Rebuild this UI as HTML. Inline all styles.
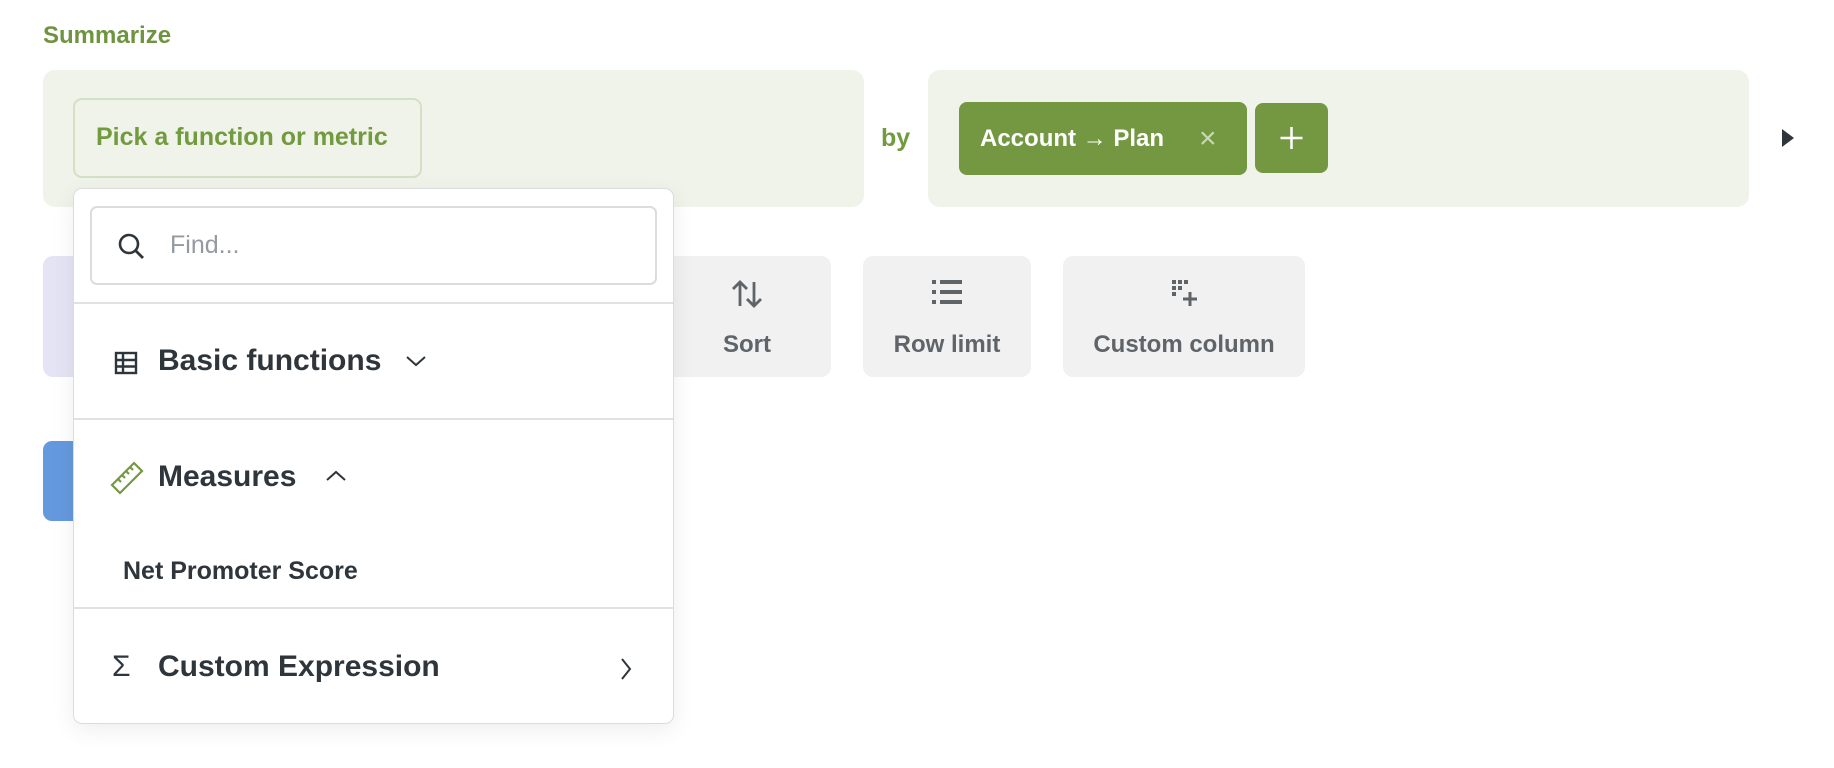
<!DOCTYPE html>
<html><head><meta charset="utf-8"><style>
*{box-sizing:border-box;margin:0;padding:0}
body{width:1834px;height:768px;background:#fff;font-family:"Liberation Sans",sans-serif;position:relative;overflow:hidden}
.abs{position:absolute}
.panel{background:#f0f3ea;border-radius:12px}
.btn{background:#f1f1f2;border-radius:10px;color:#5f6469;font-weight:bold;font-size:24px;text-align:center}
.btn svg{position:absolute;left:50%;top:22px;transform:translateX(-50%)}
.btn span{position:absolute;left:0;right:0;top:75px}
.dd{left:73px;top:188px;width:601px;height:536px;background:#fff;border:1px solid #dcdcdc;border-radius:9px;box-shadow:0 6px 24px rgba(0,0,0,0.07)}
.hr{position:absolute;left:0;right:0;height:2px;background:#e1e1e1}
.h{position:absolute;font-weight:bold;font-size:30px;color:#2e353b}
</style></head><body>
<div class="abs" style="left:43px;top:22px;font-size:24px;font-weight:bold;color:#6f9440">Summarize</div>
<div class="abs panel" style="left:43px;top:70px;width:821px;height:137px"></div>
<div class="abs" style="left:73px;top:98px;width:349px;height:80px;border:2.5px solid #d3e0c4;border-radius:9px;color:#729a3e;font-weight:bold;font-size:25px;line-height:75px;padding-left:21px;white-space:nowrap">Pick a function or metric</div>
<div class="abs" style="left:881px;top:124px;font-weight:bold;font-size:25px;color:#729a3e">by</div>
<div class="abs panel" style="left:928px;top:70px;width:821px;height:137px"></div>
<div class="abs" style="left:959px;top:102px;width:288px;height:73px;background:#749842;border-radius:8px;color:#fff;font-weight:bold;font-size:24px;line-height:73px;padding-left:21px;white-space:nowrap">Account → Plan<span style="position:absolute;left:240px;top:0;color:#c8d9b3;font-weight:normal;font-size:30px">×</span></div>
<div class="abs" style="left:1255px;top:103px;width:73px;height:70px;background:#749842;border-radius:8px">
<svg width="73" height="70"><path d="M36.5 24v22M25.5 35h22" stroke="#fff" stroke-width="2.5"/></svg></div>
<svg class="abs" style="left:1780px;top:128px" width="16" height="20"><path d="M2 1L14 10L2 19Z" fill="#2e353b"/></svg>

<div class="abs" style="left:43px;top:256px;width:120px;height:121px;background:#e4e4f5;border-radius:10px"></div>
<div class="abs btn" style="left:663px;top:256px;width:168px;height:121px">
<svg width="34" height="32"><path d="M10 28V4M3 11l7-7 7 7M24 4v24M17 21l7 7 7-7" stroke="#5f6469" stroke-width="2.8" fill="none"/></svg><span>Sort</span></div>
<div class="abs btn" style="left:863px;top:256px;width:168px;height:121px">
<svg width="32" height="28"><g fill="#5f6469"><rect x="1" y="2" width="4" height="4"/><rect x="9" y="2" width="22" height="4"/><rect x="1" y="12" width="4" height="4"/><rect x="9" y="12" width="22" height="4"/><rect x="1" y="22" width="4" height="4"/><rect x="9" y="22" width="22" height="4"/></g></svg><span>Row limit</span></div>
<div class="abs btn" style="left:1063px;top:256px;width:242px;height:121px">
<svg width="32" height="32"><g fill="#5f6469"><rect x="4" y="2" width="4" height="4"/><rect x="10" y="2" width="4" height="4"/><rect x="16" y="2" width="4" height="4"/><rect x="4" y="8" width="4" height="4"/><rect x="10" y="8" width="4" height="4"/><rect x="4" y="14" width="4" height="4"/></g><path d="M22 14v14M15 21h14" stroke="#5f6469" stroke-width="3"/></svg><span>Custom column</span></div>
<div class="abs" style="left:43px;top:441px;width:60px;height:80px;background:#6599de;border-radius:9px"></div>

<div class="abs dd">
<div class="abs" style="left:16px;top:17px;width:567px;height:79px;border:2px solid #dcdcdc;border-radius:7px">
<svg class="abs" style="left:25px;top:24px" width="30" height="30"><circle cx="12" cy="12" r="9" stroke="#2e353b" stroke-width="2.6" fill="none"/><path d="M18.5 18.5L26 26" stroke="#2e353b" stroke-width="2.8"/></svg>
<div class="abs" style="left:78px;top:23px;font-size:25px;color:#949aa0">Find...</div></div>
<div class="hr" style="top:113px"></div>
<svg class="abs" style="left:40px;top:162px" width="24" height="24"><g fill="none" stroke="#2e353b" stroke-width="2.4"><rect x="2" y="2" width="20" height="20"/><path d="M2 9h20M2 15.5h20M9 2v20"/></g></svg>
<div class="h" style="top:155px;left:84px">Basic functions</div>
<svg class="abs" style="left:331px;top:165px" width="22" height="14"><path d="M2 3l9 8 9-8" stroke="#2e353b" stroke-width="2" fill="none"/></svg>
<div class="hr" style="top:229px"></div>
<svg class="abs" style="left:36px;top:272px" width="34" height="34"><g fill="none" stroke="#749842" stroke-width="2.2"><path d="M2 24L24 2l8 8-22 22z"/><path d="M8 18l3 3M12 14l3 3M16 10l3 3M20 6l3 3"/></g></svg>
<div class="h" style="top:271px;left:84px">Measures</div>
<svg class="abs" style="left:251px;top:280px" width="22" height="14"><path d="M2 11l9-8 9 8" stroke="#2e353b" stroke-width="2" fill="none"/></svg>
<div class="abs" style="left:49px;top:368px;font-size:25px;font-weight:bold;color:#2e353b;white-space:nowrap">Net Promoter Score</div>
<div class="hr" style="top:418px"></div>
<div class="h" style="top:461px;left:38px;font-weight:normal;font-size:30px">Σ</div>
<div class="h" style="top:461px;left:84px;white-space:nowrap">Custom Expression</div>
<svg class="abs" style="left:545px;top:468px" width="14" height="24"><path d="M3 2l8 10-8 10" stroke="#2e353b" stroke-width="2" fill="none"/></svg>
</div>
</body></html>
